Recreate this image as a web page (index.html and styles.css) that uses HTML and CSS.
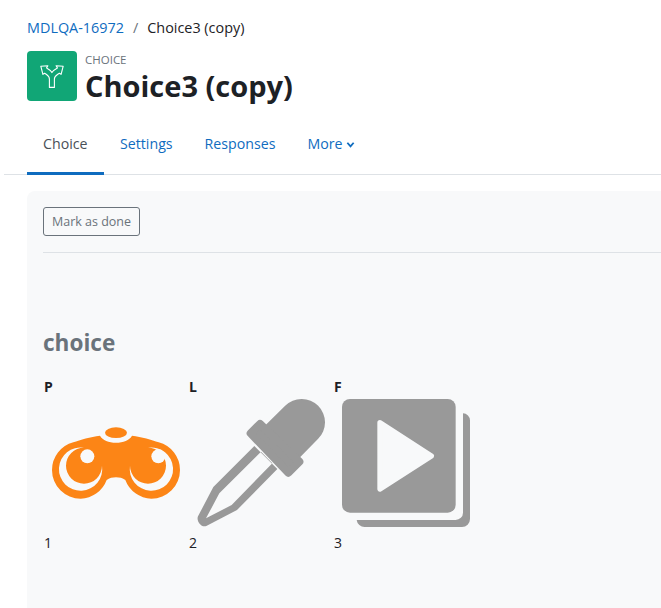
FILE: index.html
```html
<!DOCTYPE html>
<html>
<head>
    <title>Choice3 (copy)</title>
    <link rel="stylesheet" href="styles.css">
</head>
<body>

    <div class="page">
        <div class="pageHeader">
            <nav class="breadcrumb">
                <a href="#">MDLQA-16972</a>
                <span class="sep">/</span>
                <span>Choice3 (copy)</span>
            </nav>
            <div class="titleRow">
                <div class="activityIcon">
                    <svg viewBox="0 0 24 24" width="24" height="24">
                        <path class="fork" d="M9.4 23.4V15C9.4 12.6 8 11.4 6.2 10.2L4.6 9.2L2.9 10.4L.8 2.2L7.9 1.8L6.6 3.9C9 5.2 11 6.8 11.9 8.6C12.8 6.8 15 5.2 17.4 3.9L16.1 1.8L23.2 2.2L21.1 10.4L19.4 9.2L17.8 10.2C16 11.4 14.4 12.6 14.4 15V23.4Z"/>
                    </svg>
                </div>
                <div class="titleText">
                    <div class="modType">CHOICE</div>
                    <h1>Choice3 (copy)</h1>
                </div>
            </div>
        </div>

        <div class="tabs">
            <a class="tab active" href="#">Choice</a>
            <a class="tab" href="#">Settings</a>
            <a class="tab" href="#">Responses</a>
            <a class="tab" href="#">More
                <svg class="chevron" viewBox="0 0 10 8" width="10" height="8">
                    <path d="M1.5 1.5L5 5.5L8.5 1.5"/>
                </svg>
            </a>
        </div>

        <div class="card">
            <div class="completion">
                <button class="markDone">Mark as done</button>
            </div>
            <h2>choice</h2>
            <div class="options">
                <div class="option">
                    <div class="optionLabel">P</div>
                    <svg class="optionImage" viewBox="0 0 384 384">
                        <ellipse class="orange" cx="192" cy="101" rx="33" ry="16"/>
                        <path class="orange" d="M144 110C115 114 85 122 64 130A86 86 0 0 0 0 213A86 86 0 0 0 86 299A86 86 0 0 0 164 243C172 237 182 235 192 235C202 235 212 237 220 243A86 86 0 0 0 298 299A86 86 0 0 0 384 213A86 86 0 0 0 320 130C299 122 269 114 240 110C232 124 214 131 192 131C170 131 152 124 144 110Z"/>
                        <path class="gap" d="M96 146A65 65 0 1 0 150 200A54 54 0 1 1 96 146Z"/>
                        <path class="gap" d="M288 146A65 65 0 1 1 234 200A54 54 0 1 0 288 146Z"/>
                        <circle class="gap" cx="106" cy="172" r="21"/>
                        <circle class="gap" cx="319" cy="172" r="21"/>
                    </svg>
                    <div class="optionNum">1</div>
                </div>
                <div class="option">
                    <div class="optionLabel">L</div>
                    <svg class="optionImage" viewBox="0 0 384 384">
                        <path class="grey" d="M264.500 20.500A70 70 0 0 1 363.500 119.500L290 194L190 94Z"/>
                        <polygon class="greyRound" points="189,75 161,103 274,221 307,188"/>
                        <path class="tube" fill-rule="evenodd" d="M172 141L49 264L3 352C-3 364 12 387 28 381L120 333L241 210ZM192 158L67 283L27 358L104 318L226 193Z"/>
                    </svg>
                    <div class="optionNum">2</div>
                </div>
                <div class="option">
                    <div class="optionLabel">F</div>
                    <svg class="optionImage" viewBox="0 0 384 384">
                        <rect class="grey" x="0" y="0" width="341" height="341" rx="24"/>
                        <path class="grey" d="M363 43A21 21 0 0 1 384 64V360A24 24 0 0 1 360 384H68A24 24 0 0 1 44 363H341A22 22 0 0 0 363 341Z"/>
                        <polygon class="playBtn" points="114,71 268,171 114,270"/>
                    </svg>
                    <div class="optionNum">3</div>
                </div>
            </div>
        </div>
    </div>

</body>
</html>
```

FILE: styles.css
```css
html, body {
    margin: 0;
    padding: 0;
    height: 608px;
    overflow: hidden;
}

body {
    font-family: "Open Sans", "Noto Sans", sans-serif;
    font-size: 14px;
    color: #1d2125;
    background-color: white;
}

a {
    color: #0f6cbf;
    text-decoration: none;
}

.pageHeader {
    padding: 18px 0 0 27px;
}

.breadcrumb {
    display: flex;
    gap: 9px;
    font-size: 14.4px;
    line-height: 20px;
}

.sep {
    color: #6a737b;
}

.titleRow {
    display: flex;
    align-items: flex-start;
    gap: 8px;
    margin-top: 13px;
}

.activityIcon {
    width: 50px;
    height: 50px;
    background-color: #11a676;
    border-radius: 4px;
    display: flex;
    align-items: center;
    justify-content: center;
}

.fork {
    fill: none;
    stroke: white;
    stroke-width: 1.1;
    stroke-linejoin: round;
}

.titleText {
    padding-top: 1px;
}

.modType {
    font-size: 11.5px;
    line-height: 16px;
    color: #6a737b;
}

h1 {
    margin: 0;
    font-size: 29px;
    line-height: 36px;
    font-weight: 700;
}

.tabs {
    display: flex;
    margin: 17px 0 0 4px;
    padding-left: 23px;
    border-bottom: 1px solid #dee2e6;
    height: 53px;
    font-size: 14.2px;
}

.tab {
    padding: 0 16px;
    line-height: 45px;
    height: 53px;
    box-sizing: border-box;
}

.tab.active {
    color: #495057;
    border-bottom: 3px solid #0f6cbf;
    height: 54px;
    width: 77px;
}

.chevron {
    width: 9px;
    fill: none;
    stroke: #0f6cbf;
    stroke-width: 2;
}

.card {
    box-sizing: border-box;
    height: 417px;
    margin: 16px 0 0 27px;
    padding: 16px;
    background-color: #f8f9fa;
    border-top-left-radius: 8px;
}

.completion {
    margin-right: -16px;
    padding-bottom: 16px;
    border-bottom: 1px solid #dee2e6;
}

.markDone {
    display: block;
    width: 97px;
    height: 29px;
    padding: 0;
    font-family: inherit;
    font-size: 12.5px;
    color: #6a737b;
    background-color: transparent;
    border: 1px solid #6a737b;
    border-radius: 3px;
}

h2 {
    margin: 74px 0 0;
    font-size: 22.6px;
    line-height: 32px;
    font-weight: 700;
    color: #6a737b;
}

.options {
    display: flex;
    margin-top: 18px;
    padding-left: 1px;
}

.option {
    width: 145px;
}

.optionLabel {
    font-weight: 700;
    line-height: 20px;
}

.optionImage {
    display: block;
    width: 128px;
    height: 128px;
    margin: 2px 0 0 8px;
}

.optionNum {
    margin-top: 6px;
    line-height: 20px;
}

.orange {
    fill: #fc8516;
}

.gap {
    fill: #f8f9fa;
}

.grey {
    fill: #999999;
}

.greyRound {
    fill: #999999;
    stroke: #999999;
    stroke-width: 24;
    stroke-linejoin: round;
}

.tube {
    fill: #999999;
}

.playBtn {
    fill: #f8f9fa;
    stroke: #f8f9fa;
    stroke-width: 16;
    stroke-linejoin: round;
}
```
